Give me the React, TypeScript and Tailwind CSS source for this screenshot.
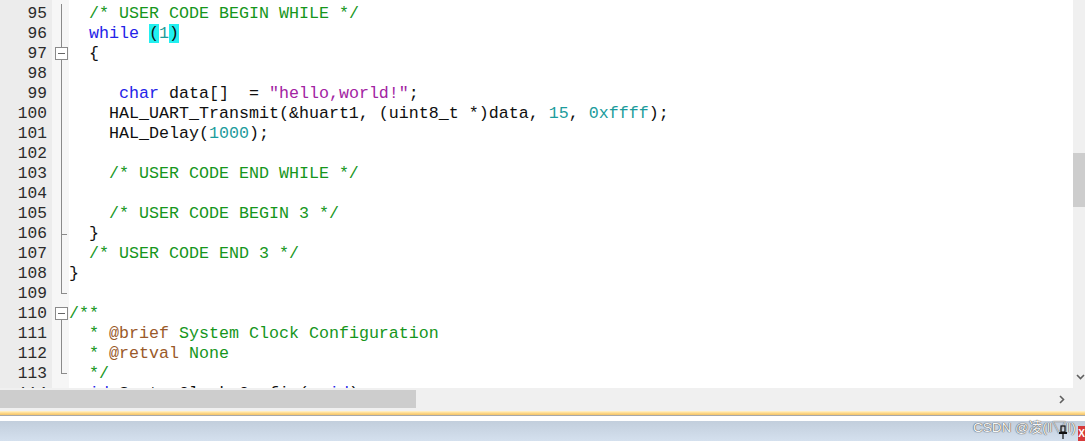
import React from "react";

type Seg = [string, string, string?];

const C = "#16961c";
const K = "#2424e8";
const N = "#1c9c9c";
const S = "#a224a2";
const T = "#9a5a2a";
const D = "#101010";
const CY = "#22f0f0";

const lines: { n: number; segs: Seg[] }[] = [
  { n: 95, segs: [["  ", D], ["/* USER CODE BEGIN WHILE */", C]] },
  { n: 96, segs: [["  ", D], ["while", K], [" ", D], ["(", D, CY], ["1", N], [")", D, CY]] },
  { n: 97, segs: [["  {", D]] },
  { n: 98, segs: [] },
  { n: 99, segs: [["     ", D], ["char", K], [" data[]  = ", D], ['"hello,world!"', S], [";", D]] },
  { n: 100, segs: [["    HAL_UART_Transmit(&huart1, (uint8_t *)data, ", D], ["15", N], [", ", D], ["0xffff", N], [");", D]] },
  { n: 101, segs: [["    HAL_Delay(", D], ["1000", N], [");", D]] },
  { n: 102, segs: [] },
  { n: 103, segs: [["    ", D], ["/* USER CODE END WHILE */", C]] },
  { n: 104, segs: [] },
  { n: 105, segs: [["    ", D], ["/* USER CODE BEGIN 3 */", C]] },
  { n: 106, segs: [["  }", D]] },
  { n: 107, segs: [["  ", D], ["/* USER CODE END 3 */", C]] },
  { n: 108, segs: [["}", D]] },
  { n: 109, segs: [] },
  { n: 110, segs: [["/**", C]] },
  { n: 111, segs: [["  * ", C], ["@brief", T], [" System Clock Configuration", C]] },
  { n: 112, segs: [["  * ", C], ["@retval", T], [" None", C]] },
  { n: 113, segs: [["  */", C]] },
  { n: 114, segs: [["void", K], [" SystemClock_Config(", D], ["void", K], [")", D]] },
];

type Fold = "line" | "box" | "boxStart" | "tick" | "end" | "none";
const folds: Record<number, Fold> = {
  95: "line", 96: "line", 97: "box", 98: "line", 99: "line", 100: "line", 101: "line",
  102: "line", 103: "line", 104: "line", 105: "line", 106: "tick", 107: "line", 108: "line",
  109: "end", 110: "boxStart", 111: "line", 112: "line", 113: "end", 114: "none",
};

const G = "#8a8a8a";

function FoldMark({ kind }: { kind: Fold }) {
  return (
    <svg width="17" height="20" viewBox="0 0 17 20" className="block">
      {kind === "line" && <line x1="9.5" y1="0" x2="9.5" y2="20" stroke={G} strokeWidth="1" />}
      {kind === "tick" && (
        <>
          <line x1="9.5" y1="0" x2="9.5" y2="20" stroke={G} strokeWidth="1" />
          <line x1="9.5" y1="10.5" x2="15" y2="10.5" stroke={G} strokeWidth="1" />
        </>
      )}
      {kind === "end" && (
        <>
          <line x1="9.5" y1="0" x2="9.5" y2="10" stroke={G} strokeWidth="1" />
          <line x1="9.5" y1="9.5" x2="15" y2="9.5" stroke={G} strokeWidth="1" />
        </>
      )}
      {(kind === "box" || kind === "boxStart") && (
        <>
          {kind === "box" && <line x1="9.5" y1="0" x2="9.5" y2="3" stroke={G} strokeWidth="1" />}
          <rect x="3.5" y="3.5" width="12" height="12" fill="#ffffff" stroke={G} strokeWidth="1" />
          <line x1="6" y1="9.5" x2="13" y2="9.5" stroke="#666" strokeWidth="1" />
          <line x1="9.5" y1="15.5" x2="9.5" y2="20" stroke={G} strokeWidth="1" />
        </>
      )}
    </svg>
  );
}

export default function App() {
  const mono = { fontFamily: '"Liberation Mono", "Courier New", monospace' };
  return (
    <div className="w-[1085px] h-[441px] flex flex-col overflow-hidden bg-white">
      <div className="h-[388px] flex flex-row overflow-hidden">
        <div className="w-[52px] bg-[#ececec] pt-[4px] flex flex-col" style={mono}>
          {lines.map((l) => (
            <div key={l.n} className="h-[20px] shrink-0 leading-[20px] text-[16.2px] text-right pr-[5px] text-[#2a2a2a]">
              {l.n}
            </div>
          ))}
        </div>
        <div className="w-[17px] bg-[#f6f6f6] pt-[4px] flex flex-col">
          {lines.map((l) => (
            <div key={l.n} className="h-[20px] shrink-0">
              <FoldMark kind={folds[l.n]} />
            </div>
          ))}
        </div>
        <div className="flex-1 bg-white pt-[4px] flex flex-col rounded-br-[3px]" style={mono}>
          {lines.map((l) => (
            <div key={l.n} className="h-[20px] shrink-0 leading-[20px] text-[16.67px] whitespace-pre">
              {l.segs.length === 0 ? " " : l.segs.map((s, i) => (
                <span key={i} style={{ color: s[1], backgroundColor: s[2] }}>{s[0]}</span>
              ))}
            </div>
          ))}
        </div>
        <div className="w-[12px] bg-[#f0f0f0] flex flex-col">
          <div className="h-[153px]" />
          <div className="h-[54px] bg-[#cdcdcd]" />
          <div className="flex-1" />
          <div className="h-[14px] flex items-start pl-[3px] pb-[4px]">
            <svg width="9" height="6" viewBox="0 0 9 6">
              <path d="M1 1 L4.5 4.5 L8 1" fill="none" stroke="#606060" strokeWidth="1.6" />
            </svg>
          </div>
        </div>
      </div>
      <div className="h-[23px] bg-[#f0f0f0] flex flex-row items-start">
        <div className="w-[416px] h-[18px] mt-[2px] bg-[#cdcdcd]" />
        <div className="flex-1" />
        <div className="h-[23px] w-[20px] flex items-center justify-center mr-[13px]">
          <svg width="6" height="9" viewBox="0 0 6 9">
            <path d="M1 1 L4.5 4.5 L1 8" fill="none" stroke="#606060" strokeWidth="1.6" />
          </svg>
        </div>
      </div>
      <div className="h-[4px] bg-gradient-to-b from-[#fff4cc] via-[#ffd98a] to-[#f2c46a]" />
      <div className="h-[1px] bg-[#a8a8a8]" />
      <div className="h-[5px] bg-white" />
      <div className="h-[20px] relative bg-gradient-to-b from-[#c2cedc] to-[#d4e0ee] flex flex-row items-end justify-end">
        <div
          className="absolute left-[973px] top-[-2px] text-[13.5px] leading-[17px] text-[#f6f6f6] whitespace-nowrap [text-shadow:0_0_1px_#444,0_0_1px_#444]"
          style={{ fontFamily: '"Liberation Sans", "Noto Sans CJK SC", sans-serif' }}
        >
          CSDN @凌(ǁ▽ǁ)
        </div>
        <div className="relative w-[10px] h-[14px] mr-[10px] mb-[2px]">
          <svg width="10" height="14" viewBox="0 0 10 14">
            <rect x="3" y="1" width="4" height="6" fill="none" stroke="#111" strokeWidth="1.2" />
            <rect x="1" y="7" width="8" height="2" fill="#111" />
            <line x1="5" y1="9" x2="5" y2="14" stroke="#111" strokeWidth="1.2" />
          </svg>
        </div>
        <div className="w-[7px] h-[15px] bg-[#d63a3a] flex items-center justify-end overflow-hidden">
          <span className="text-white text-[10px] leading-[10px] font-bold" style={{ fontFamily: '"Liberation Sans", sans-serif' }}>X</span>
        </div>
      </div>
    </div>
  );
}
